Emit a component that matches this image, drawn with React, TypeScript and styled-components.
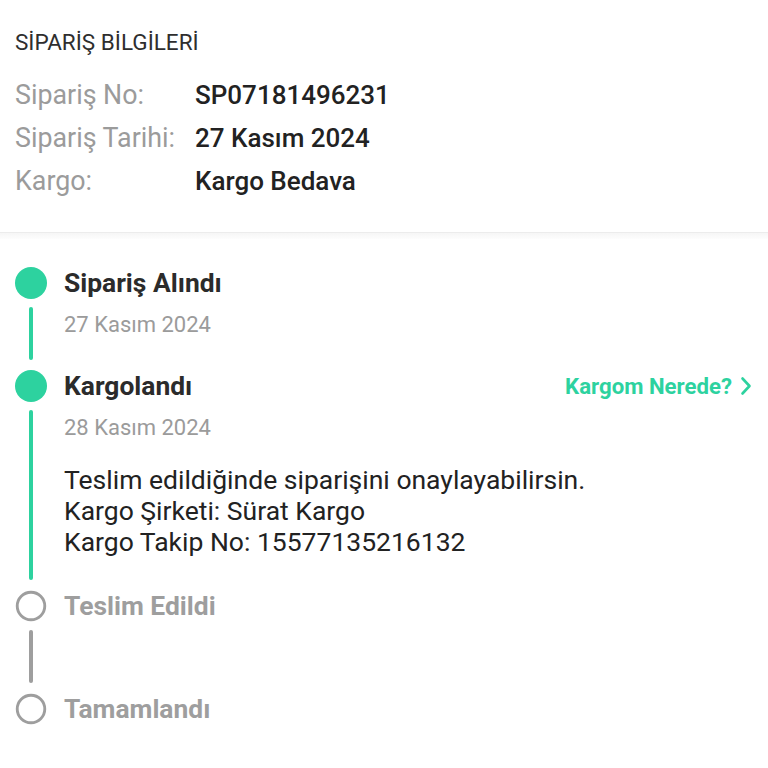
import React from "react";
import styled, { createGlobalStyle } from "styled-components";

const GREEN = "#2dd29f";
const GRAY = "#9e9e9e";

const GlobalStyle = createGlobalStyle`
  html, body {
    margin: 0;
    padding: 0;
    background: #ffffff;
  }
  body {
    font-family: Roboto, "Noto Sans", "Liberation Sans", sans-serif;
    color: #222222;
  }
`;

const Page = styled.div`
  width: 768px;
`;

const InfoSection = styled.section`
  padding: 28px 15px 29px;
`;

const SectionTitle = styled.div`
  font-size: 22.5px;
  line-height: 28px;
  color: #2e2e2e;
  margin-bottom: 18px;
`;

const InfoRow = styled.div`
  display: grid;
  grid-template-columns: 180px 1fr;
  line-height: 43px;
`;

const InfoLabel = styled.span`
  font-size: 26.8px;
  color: #9b9b9b;
`;

const InfoValue = styled.span`
  font-size: 26px;
  color: #222222;
  font-weight: 500;
`;

const Divider = styled.div`
  height: 6px;
  border-top: 1px solid #ececec;
  background: linear-gradient(#f6f6f6, #fdfdfd);
`;

const Timeline = styled.section`
  padding: 28px 15px 0;
`;

const Step = styled.div`
  display: grid;
  grid-template-columns: 32px 1fr;
  column-gap: 17px;
`;

const Rail = styled.div`
  display: flex;
  flex-direction: column;
  align-items: center;
`;

const Dot = styled.div<{ $done: boolean }>`
  width: 32px;
  height: 32px;
  box-sizing: border-box;
  border-radius: 50%;
  flex-shrink: 0;
  background: ${(p) => (p.$done ? GREEN : "#ffffff")};
  border: ${(p) => (p.$done ? "none" : `3px solid ${GRAY}`)};
  transform: ${(p) => (p.$done ? "none" : "scale(0.95)")};
`;

const Connector = styled.div<{ $done: boolean }>`
  flex: 1;
  width: 4px;
  border-radius: 2px;
  margin: 8px 0 10px;
  background: ${(p) => (p.$done ? GREEN : GRAY)};
`;

const Content = styled.div<{ $minHeight?: number }>`
  padding-bottom: 30px;
  min-height: ${(p) => (p.$minHeight ? `${p.$minHeight}px` : "auto")};
  box-sizing: border-box;
`;

const TitleLine = styled.div`
  display: flex;
  align-items: center;
  justify-content: space-between;
  height: 32px;
`;

const StepTitle = styled.div<{ $done: boolean }>`
  font-size: 26.4px;
  font-weight: 700;
  color: ${(p) => (p.$done ? "#2b2b2b" : GRAY)};
`;

const TrackLink = styled.a`
  display: flex;
  align-items: center;
  gap: 8px;
  font-size: 22.2px;
  font-weight: 700;
  color: ${GREEN};
  text-decoration: none;
  margin-right: 1px;
`;

const StepDate = styled.div`
  margin-top: 11px;
  font-size: 22px;
  line-height: 30px;
  color: #9b9b9b;
`;

const StepNote = styled.div`
  margin: 21px 0 3px;
  font-size: 26.5px;
  line-height: 31px;
  color: #222222;
`;

type StepData = {
  title: string;
  done: boolean;
  date?: string;
  note?: string[];
  link?: string;
  minHeight?: number;
};

const steps: StepData[] = [
  { title: "Sipariş Alındı", done: true, date: "27 Kasım 2024" },
  {
    title: "Kargolandı",
    done: true,
    date: "28 Kasım 2024",
    link: "Kargom Nerede?",
    note: [
      "Teslim edildiğinde siparişini onaylayabilirsin.",
      "Kargo Şirketi: Sürat Kargo",
      "Kargo Takip No: 15577135216132",
    ],
  },
  { title: "Teslim Edildi", done: false, minHeight: 103 },
  { title: "Tamamlandı", done: false },
];

const Chevron = () => (
  <svg width="12" height="20" viewBox="0 0 12 20" fill="none">
    <path
      d="M2.5 2.5 L9.5 10 L2.5 17.5"
      stroke={GREEN}
      strokeWidth="2.6"
      strokeLinecap="round"
      strokeLinejoin="round"
    />
  </svg>
);

const info = [
  ["Sipariş No:", "SP07181496231"],
  ["Sipariş Tarihi:", "27 Kasım 2024"],
  ["Kargo:", "Kargo Bedava"],
];

const App = () => {
  return (
    <Page>
      <GlobalStyle />
      <InfoSection>
        <SectionTitle>SİPARİŞ BİLGİLERİ</SectionTitle>
        {info.map(([label, value]) => (
          <InfoRow key={label}>
            <InfoLabel>{label}</InfoLabel>
            <InfoValue>{value}</InfoValue>
          </InfoRow>
        ))}
      </InfoSection>
      <Divider />
      <Timeline>
        {steps.map((step, i) => {
          const last = i === steps.length - 1;
          return (
            <Step key={step.title}>
              <Rail>
                <Dot $done={step.done} />
                {!last && <Connector $done={step.done} />}
              </Rail>
              <Content $minHeight={step.minHeight}>
                <TitleLine>
                  <StepTitle $done={step.done}>{step.title}</StepTitle>
                  {step.link && (
                    <TrackLink href="#">
                      {step.link}
                      <Chevron />
                    </TrackLink>
                  )}
                </TitleLine>
                {step.date && <StepDate>{step.date}</StepDate>}
                {step.note && (
                  <StepNote>
                    {step.note.map((line) => (
                      <div key={line}>{line}</div>
                    ))}
                  </StepNote>
                )}
              </Content>
            </Step>
          );
        })}
      </Timeline>
    </Page>
  );
};

export default App;
